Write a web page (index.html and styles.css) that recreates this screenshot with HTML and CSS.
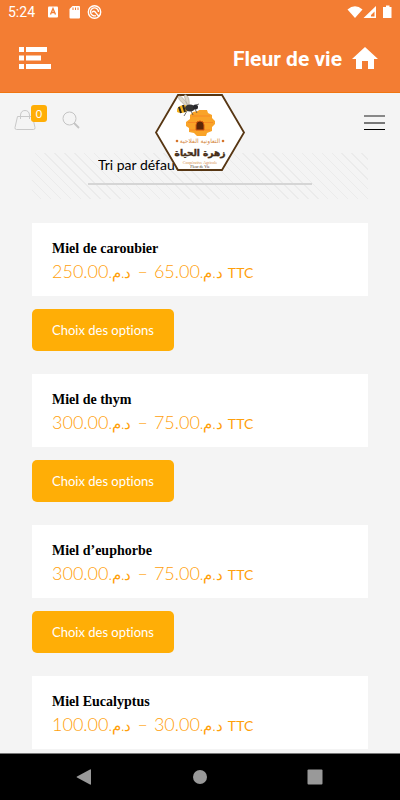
FILE: index.html
```html
<!DOCTYPE html>
<html lang="fr">
<head>
<meta charset="utf-8">
<meta name="viewport" content="width=device-width, initial-scale=1">
<title>Fleur de vie</title>
<link rel="stylesheet" href="styles.css">
</head>
<body>
<div class="status">
  <span class="clock">5:24</span>
  <svg class="status-left" width="56" height="16" viewBox="0 0 56 16" fill="#fff" aria-hidden="true">
    <rect x="1" y="2.500" width="10" height="11" rx="1"/>
    <path d="M3.500 10.500 6 4.500l2.500 6M4.500 8.500h3" fill="none" stroke="#f37d33" stroke-width="1.300"/>
    <path d="M25.500 2H32a1 1 0 0 1 1 1v10.500a1 1 0 0 1-1 1h-8.500a1 1 0 0 1-1-1V5z"/>
    <path d="M26 3.500v2.500M28.500 3.500v2.500M31 3.500v2.500" stroke="#f37d33"/>
    <circle cx="47.500" cy="8" r="6.200" fill="none" stroke="#fff" stroke-width="1.400"/>
    <path d="M49 11.600A4 4 0 1 1 51.500 8M45 8.500c1-2 3-1.500 3.500 0l3.500 4" fill="none" stroke="#fff" stroke-width="1.400"/>
  </svg>
  <svg class="status-right" width="46" height="16" viewBox="0 0 46 16" fill="#fff" aria-hidden="true">
    <path d="M.5 5.500Q8 -1 15.500 5.500L8 14z"/>
    <path fill-rule="evenodd" d="M29 2v12H16.500zM27.500 7.500 24 11v1.500h3.500z"/>
    <path d="M37 3h2V1.500h3.500V3h2v11H36V3z"/>
  </svg>
</div>
<header class="appbar">
  <button class="icon-btn" type="button" aria-label="Menu">
    <svg width="33" height="22" viewBox="0 0 33 22" fill="#fff"><path d="M0 0h5v5H0zM7 0h21v5H7zM0 8.500h5v5H0zM7 8.500h15v5H7zM0 17h5v5H0zM7 17h25v5H7z"/></svg>
  </button>
  <h1 class="app-title">Fleur de vie</h1>
  <a class="home" href="#" aria-label="Accueil">
    <svg width="26" height="22" viewBox="0 0 26 22" fill="#fff"><path d="M13 0 26 12h-4v10h-6v-8h-6v8H4V12H0z"/></svg>
  </a>
</header>
<div class="page">
  <div class="site-header">
    <a class="cart" href="#" aria-label="Panier">
      <svg width="22" height="22" viewBox="0 0 22 22" fill="none" stroke="#c9c9c9"><path d="M3.500 7.500h15l2.500 11q.3 2-1.500 2h-17q-1.800 0-1.500-2zM6.500 10V6Q7 1.500 11 1.500T15.500 6v4"/></svg>
      <span class="badge">0</span>
    </a>
    <button class="icon-btn search" type="button" aria-label="Rechercher">
      <svg width="18" height="18" viewBox="0 0 18 18" fill="none" stroke="#c4c4c4"><circle cx="7.500" cy="7.500" r="6.500"/><path d="m12 12 5 5" stroke-width="1.800"/></svg>
    </button>
    <a class="logo" href="#" aria-label="Fleur de Vie">
      <svg width="92" height="80" viewBox="0 0 92 80">
        <path d="M24 2h44l22 37.500L68 77H24L2 39.500z" fill="#fff" stroke="#573613" stroke-width="1.800"/>
        <path d="m39 19 5-1 1-1h8l1 3 4 2v3l3 3v3l-3 3v4l-5 2-1 3h-9l-3-3-5-1v-4l-3-2v-4l4-3v-4z" fill="#f9a328"/>
        <path d="M38 23h18M34 29.500h8M50 29.500h9M36 37h20" stroke="#f78a24" stroke-width="1.200"/>
        <path d="M42 37v-5q0-4 4-4t4 4v5z" fill="#5b2608" stroke="#d65b10"/>
        <path d="M32 13Q22 5 25 3q4 0 9 10Q28 0 32 2q4 2 3 11" fill="#ddd8cb" stroke="#aaa291" stroke-width=".6"/>
        <path d="M31 12q-9 0-8 7 6 3 13-3z" fill="#f6b31e"/>
        <path d="m25 14 2 6M29 12l2 7" stroke="#2b2720" stroke-width="2"/>
        <ellipse cx="36" cy="15" rx="5" ry="3.500" fill="#353535"/><circle cx="41.500" cy="14" r="2.500" fill="#29292c"/>
        <path d="m33 18-3 5M37 18l2 4M41 16l2 4M42 12l3-1" fill="none" stroke="#4b4b4b" stroke-width=".8"/>
        <circle cx="23" cy="48" r="1.300" fill="#d5742b"/><circle cx="69" cy="48" r="1.300" fill="#d5742b"/>
        <text class="logo-sub" x="46" y="50">التعاونية الفلاحية</text>
        <text class="logo-name" x="46" y="63">زهرة الحياة</text>
        <text class="logo-latin" x="46" y="71">Coopérative Agricole</text>
        <text class="logo-latin dark" x="46" y="75">Fleur de Vie</text>
      </svg>
    </a>
    <button class="icon-btn burger" type="button" aria-label="Navigation">
      <svg width="21" height="16" viewBox="0 0 21 16"><path d="M0 1h21" stroke="#888" stroke-width="2"/><path d="M0 8h21" stroke="#777" stroke-width="2"/><path d="M0 14.500h21" stroke="#000"/></svg>
    </button>
  </div>
  <main>
    <div class="sorting">
      <select class="sort" aria-label="Tri"><option>Tri par défaut</option></select>
    </div>
    <ul class="products">
      <li class="product">
        <div class="card"><h2>Miel de caroubier</h2><p class="price"><span class="range" dir="rtl"><span class="cur">د.م.</span><span>65.00</span><span class="dash">–</span><span class="cur">د.م.</span><span>250.00</span></span><small>TTC</small></p></div>
        <button class="choose" type="button">Choix des options</button>
      </li>
      <li class="product">
        <div class="card"><h2>Miel de thym</h2><p class="price"><span class="range" dir="rtl"><span class="cur">د.م.</span><span>75.00</span><span class="dash">–</span><span class="cur">د.م.</span><span>300.00</span></span><small>TTC</small></p></div>
        <button class="choose" type="button">Choix des options</button>
      </li>
      <li class="product">
        <div class="card"><h2>Miel d’euphorbe</h2><p class="price"><span class="range" dir="rtl"><span class="cur">د.م.</span><span>75.00</span><span class="dash">–</span><span class="cur">د.م.</span><span>300.00</span></span><small>TTC</small></p></div>
        <button class="choose" type="button">Choix des options</button>
      </li>
      <li class="product">
        <div class="card"><h2>Miel Eucalyptus</h2><p class="price"><span class="range" dir="rtl"><span class="cur">د.م.</span><span>30.00</span><span class="dash">–</span><span class="cur">د.م.</span><span>100.00</span></span><small>TTC</small></p></div>
      </li>
    </ul>
  </main>
</div>
<nav class="navbar" aria-label="Système">
  <button class="icon-btn" type="button" aria-label="Retour"><svg width="16" height="16" viewBox="0 0 16 16" fill="#999"><path d="M14 .5q1-.5 1 .5v14q0 1-1 .5L1 8.500q-1-.5 0-1z"/></svg></button>
  <button class="icon-btn" type="button" aria-label="Écran d’accueil"><svg width="16" height="16" viewBox="0 0 16 16" fill="#999"><circle cx="8" cy="8" r="7"/></svg></button>
  <button class="icon-btn" type="button" aria-label="Applications récentes"><svg width="16" height="16" viewBox="0 0 16 16" fill="#999"><rect x=".5" y=".5" width="15" height="15" rx="1"/></svg></button>
</nav>
</body>
</html>
```

FILE: styles.css
```css
* { box-sizing: border-box; }
body {
  margin: 0;
  height: 100vh;
  display: flex;
  flex-direction: column;
  background: #f4f4f4;
  font-family: Lato, "DejaVu Sans", sans-serif;
}
h1, h2, p, ul { margin: 0; padding: 0; }
svg { display: block; }
.icon-btn { padding: 0; border: 0; background: none; }
.status {
  display: flex;
  align-items: center;
  height: 24px;
  padding: 0 7px 0 8px;
  background: #f37d33;
  color: #fff;
  font: 14px/24px Roboto, sans-serif;
}
.status-left { margin-left: 12px; }
.status-right { margin-left: auto; }
.appbar {
  display: flex;
  align-items: center;
  height: 69px;
  padding: 0 22px 0 19px;
  background: #f37d33;
  border-bottom: 1px solid #f07510;
  color: #fff;
}
.app-title {
  margin-left: auto;
  padding-top: 2px;
  font: bold 21px/28px Roboto, sans-serif;
}
.home { margin-left: 10px; }
.page { flex: 1; min-height: 0; overflow: hidden; }
.site-header {
  position: relative;
  display: flex;
  align-items: center;
  height: 60px;
  padding: 0 15px 0 14px;
}
.cart { position: relative; margin-bottom: 6px; }
.badge {
  position: absolute;
  left: 17px;
  top: -4px;
  width: 16px;
  border-radius: 3px;
  background: #ffae06;
  color: #fff;
  font-size: 11px;
  line-height: 17px;
  text-align: center;
}
.cart, .badge { text-decoration: none; }
.search { margin-left: 26px; margin-bottom: 6px; }
.logo { position: absolute; left: 50%; top: 0; transform: translateX(-50%); }
.logo text { text-anchor: middle; }
.logo-sub { font: 6px "DejaVu Sans", sans-serif; fill: #d5873f; }
.logo-name { font: bold 9px "DejaVu Sans", sans-serif; fill: #452c15; stroke: #452c15; stroke-width: .4px; }
.logo-latin { font: 4px "Liberation Serif", serif; fill: #d5873f; }
.logo-latin.dark { fill: #452c15; }
.burger { margin-left: auto; }
.sorting {
  height: 46px;
  margin: 0 32px;
  padding: 0 56px;
  background: repeating-linear-gradient(45deg, #f4f4f4 0 6px, #ebebeb 6px 7px);
}
.sort {
  display: block;
  width: 100%;
  height: 32px;
  padding: 0 10px 7px;
  appearance: none;
  border: 0;
  border-bottom: 2px solid #d5d5d5;
  border-radius: 0;
  background: none;
  color: #000;
  font: 14px/20px Lato, sans-serif;
}
.products {
  display: grid;
  gap: 23px;
  padding: 24px 32px;
  list-style: none;
}
.card {
  padding: 14px 20px 12px;
  background: #fff;
}
.card h2 { font: bold 14px/23px "Liberation Serif", serif; color: #000; }
.price {
  display: flex;
  align-items: baseline;
  gap: 5px;
  height: 24px;
  color: #ffa00a;
  font-size: 18px;
  font-weight: 300;
  line-height: 22px;
  white-space: nowrap;
}
.range { display: flex; align-items: baseline; }
.cur { font-size: 15px; }
.dash { margin: 0 6px; }
.price small { font-size: 14px; font-weight: 400; }
.choose {
  display: block;
  height: 42px;
  margin-top: 13px;
  padding: 0 20px;
  border: 0;
  border-radius: 5px;
  background: #ffae06;
  color: #fff;
  font: 13px/20px Lato, sans-serif;
  font-variant-ligatures: none;
}
.navbar {
  display: flex;
  justify-content: space-between;
  align-items: center;
  height: 47px;
  padding: 0 77px 0 76px;
  border-top: 1px solid #777;
  background: #000;
}
```
